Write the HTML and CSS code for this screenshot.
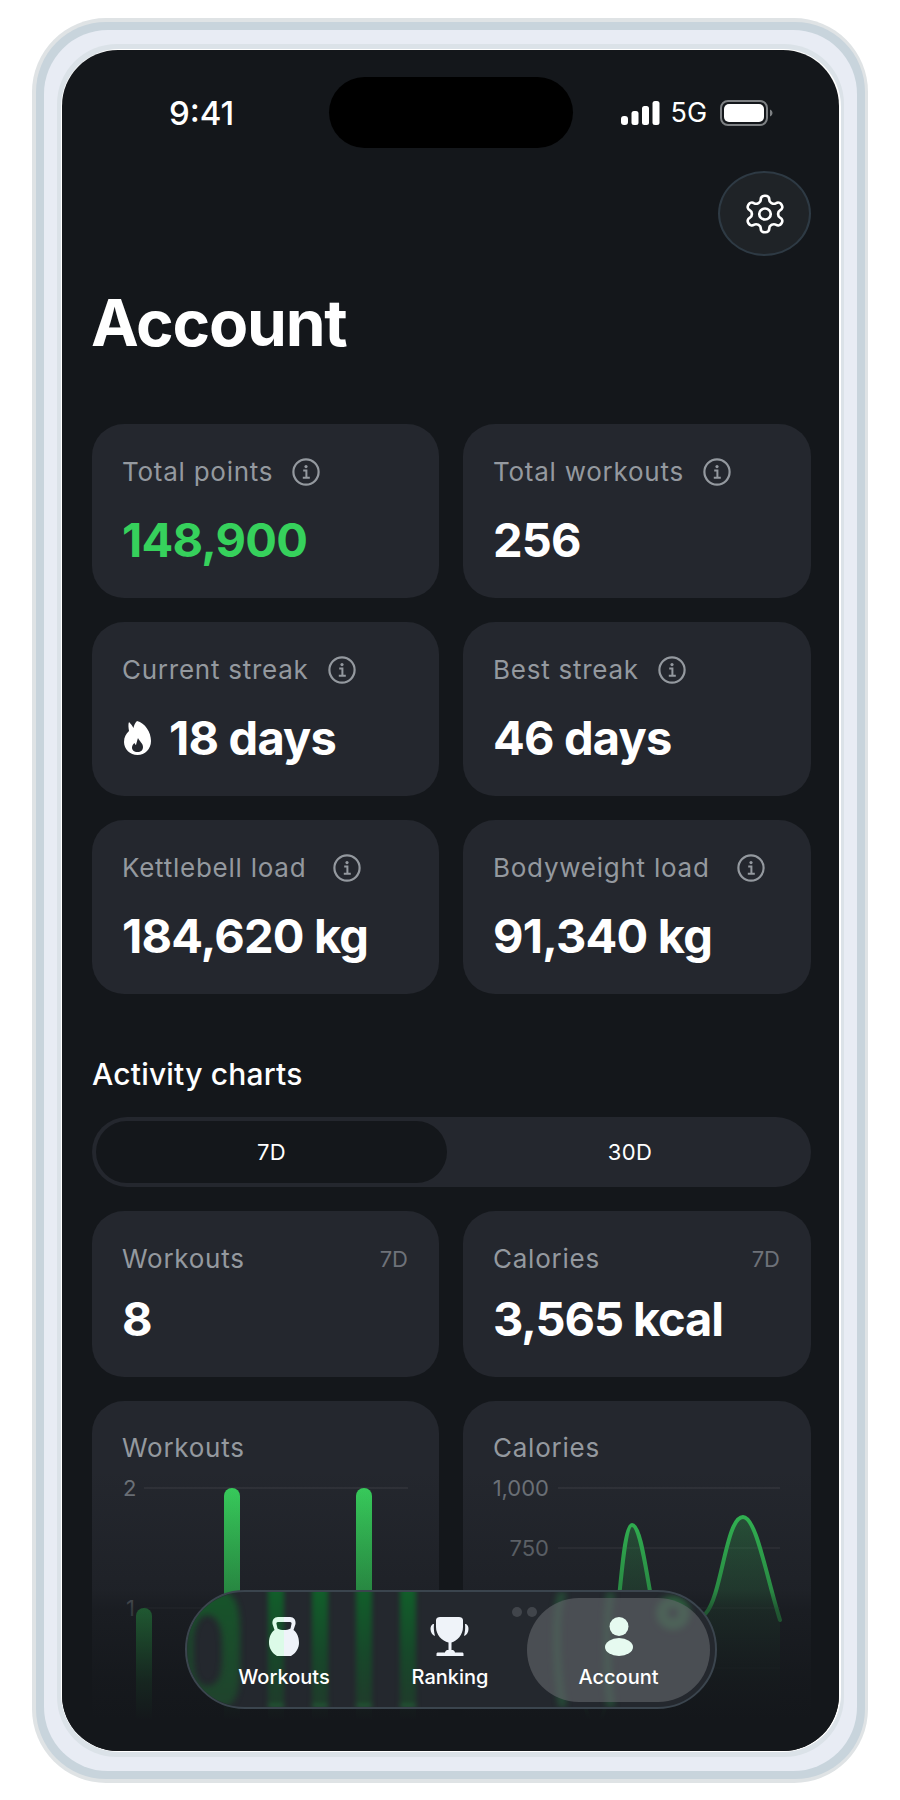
FILE: index.html
```html
<!DOCTYPE html>
<html lang="en">
<head>
    <meta charset="UTF-8">
    <meta name="viewport" content="width=device-width, initial-scale=1.0">
    <title>Account</title>
    <link rel="stylesheet" href="styles.css">
</head>
<body>
    <svg width="0" height="0" class="defs">
        <defs>
            <symbol id="info" viewBox="0 0 28 28">
                <circle cx="14" cy="14" r="12.6" fill="none" stroke="currentColor" stroke-width="2.2"/>
                <circle cx="14" cy="8.6" r="1.6" fill="currentColor"/>
                <path d="M11.2 12.6H14.4V19.6M10.8 19.8H17.8" fill="none" stroke="currentColor" stroke-width="2"/>
            </symbol>
            <linearGradient id="barFill" gradientUnits="userSpaceOnUse" x1="0" y1="23" x2="0" y2="263">
                <stop offset="0" stop-color="#39d35e"/>
                <stop offset="1" stop-color="#2bb04c"/>
            </linearGradient>
            <linearGradient id="areaFill" x1="0" y1="0" x2="0" y2="1">
                <stop offset="0" stop-color="#36c95a" stop-opacity="0.3"/>
                <stop offset="1" stop-color="#36c95a" stop-opacity="0.05"/>
            </linearGradient>
            <linearGradient id="stripeFill" x1="0" y1="0" x2="0" y2="1">
                <stop offset="0" stop-color="#11602a"/>
                <stop offset="0.55" stop-color="#17482a"/>
                <stop offset="0.97" stop-color="#1f3c2b"/>
                <stop offset="1" stop-color="#248a40"/>
            </linearGradient>
            <linearGradient id="ringFill" x1="0" y1="0" x2="0" y2="1">
                <stop offset="0" stop-color="#14602a"/>
                <stop offset="1" stop-color="#1f4a2d"/>
            </linearGradient>
            <linearGradient id="bellFill" x1="0" y1="0" x2="1" y2="0">
                <stop offset="0.5" stop-color="#dcfbe8"/>
                <stop offset="0.5" stop-color="#eff3f9"/>
            </linearGradient>
        </defs>
    </svg>

    <div class="frame frame-1"><div class="frame frame-2"><div class="frame frame-3"><div class="frame frame-4"><div class="frame frame-5">
        <main class="screen">
            <div class="status">
                <div class="time">9:41</div>
                <div class="island"></div>
                <div class="status-right">
                    <svg class="signal" width="39" height="24" viewBox="0 0 39 24" fill="#fff">
                        <rect x="0" y="15" width="7" height="9" rx="3"/>
                        <rect x="10.5" y="10" width="7" height="14" rx="2.5"/>
                        <rect x="21" y="5" width="7" height="19" rx="2.5"/>
                        <rect x="31.5" y="0" width="7" height="24" rx="2.5"/>
                    </svg>
                    <span class="net">5G</span>
                    <svg class="battery" width="53" height="26" viewBox="0 0 53 26">
                        <rect x="1" y="1" width="46" height="24" rx="7" fill="none" stroke="#7d8083" stroke-width="2"/>
                        <rect x="4" y="4" width="40" height="18" rx="5" fill="#fff"/>
                        <path d="M50 9.5C52 10.5 52.5 12 52.5 13S52 15.500 50 16.500Z" fill="#7d8083"/>
                    </svg>
                </div>
            </div>

            <div class="top-actions">
                <button class="settings">
                    <svg width="46" height="44" viewBox="0 0 24 24" preserveAspectRatio="none" fill="none" stroke="#fff" stroke-width="1.4" stroke-linecap="round" stroke-linejoin="round">
                        <path d="M12.22 2h-.44a2 2 0 0 0-2 2v.18a2 2 0 0 1-1 1.730l-.43.25a2 2 0 0 1-2 0l-.15-.08a2 2 0 0 0-2.730.73l-.22.38a2 2 0 0 0 .73 2.730l.15.1a2 2 0 0 1 1 1.720v.51a2 2 0 0 1-1 1.740l-.15.09a2 2 0 0 0-.73 2.730l.22.38a2 2 0 0 0 2.730.73l.15-.08a2 2 0 0 1 2 0l.43.25a2 2 0 0 1 1 1.730V20a2 2 0 0 0 2 2h.44a2 2 0 0 0 2-2v-.18a2 2 0 0 1 1-1.730l.43-.25a2 2 0 0 1 2 0l.15.08a2 2 0 0 0 2.730-.73l.22-.39a2 2 0 0 0-.73-2.730l-.15-.08a2 2 0 0 1-1-1.740v-.5a2 2 0 0 1 1-1.740l.15-.09a2 2 0 0 0 .73-2.730l-.22-.38a2 2 0 0 0-2.730-.73l-.15.08a2 2 0 0 1-2 0l-.43-.25a2 2 0 0 1-1-1.730V4a2 2 0 0 0-2-2z"/>
                        <circle cx="12" cy="12" r="3"/>
                    </svg>
                </button>
            </div>

            <h1 class="title">Account</h1>

            <section class="grid stats">
                <div class="card">
                    <div class="label">Total points <svg class="info"><use href="#info"/></svg></div>
                    <div class="value green">148,900</div>
                </div>
                <div class="card">
                    <div class="label">Total workouts <svg class="info"><use href="#info"/></svg></div>
                    <div class="value">256</div>
                </div>
                <div class="card">
                    <div class="label">Current streak <svg class="info"><use href="#info"/></svg></div>
                    <div class="value">
                        <svg class="flame" width="27" height="34" viewBox="0 0 27 34"><path fill="#fff" fill-rule="evenodd" d="M13 0C21 2 27 11 27 20C27 28 21 34 13.500 34C6 34 0 28 0 21C0 16 2 13 5 10C4.500 7 4 3 5 1C7 3 8.500 5 9.500 7C10 4 11 2 13 0ZM14 17C13 20 12.500 22 12 24C11.500 24 11 23 10.500 22C9.500 23 8 24 8 26.500C8 29 10 31 13.500 31C17 31 19 29 19 26C19 22 15 20 14 17Z"/></svg>
                        <span>18 days</span>
                    </div>
                </div>
                <div class="card">
                    <div class="label">Best streak <svg class="info"><use href="#info"/></svg></div>
                    <div class="value">46 days</div>
                </div>
                <div class="card">
                    <div class="label wide">Kettlebell load <svg class="info"><use href="#info"/></svg></div>
                    <div class="value">184,620 kg</div>
                </div>
                <div class="card">
                    <div class="label wide">Bodyweight load <svg class="info"><use href="#info"/></svg></div>
                    <div class="value">91,340 kg</div>
                </div>
            </section>

            <h2 class="section-title">Activity charts</h2>

            <div class="segment">
                <div class="segment-item active">7D</div>
                <div class="segment-item">30D</div>
            </div>

            <section class="grid summary">
                <div class="card small">
                    <div class="label-row"><span class="label">Workouts</span><span class="tag">7D</span></div>
                    <div class="value">8</div>
                </div>
                <div class="card small">
                    <div class="label-row"><span class="label">Calories</span><span class="tag">7D</span></div>
                    <div class="value">3,565 kcal</div>
                </div>
            </section>

            <section class="grid charts">
                <div class="card chart-card">
                    <div class="label">Workouts</div>
                    <svg class="plot" width="293" height="280" viewBox="0 0 293 280">
                        <g class="axis"><text x="0" y="31">2</text><text x="3" y="151">1</text></g>
                        <g class="gridline"><path d="M21 23H285M21 143H285"/></g>
                        <g fill="url(#barFill)">
                            <path d="M13 263V151a8 8 0 0 1 16 0V263Z"/>
                            <path d="M101 263V31a8 8 0 0 1 16 0V263Z"/>
                            <path d="M145 263V151a8 8 0 0 1 16 0V263Z"/>
                            <path d="M189 263V151a8 8 0 0 1 16 0V263Z"/>
                            <path d="M233 263V31a8 8 0 0 1 16 0V263Z"/>
                            <path d="M277 263V151a8 8 0 0 1 16 0V263Z"/>
                        </g>
                    </svg>
                </div>
                <div class="card chart-card">
                    <div class="label">Calories</div>
                    <svg class="plot" width="293" height="280" viewBox="0 0 293 280">
                        <g class="axis end"><text x="55" y="31">1,000</text><text x="55" y="91">750</text><text x="55" y="151">500</text><text x="55" y="211">250</text></g>
                        <g class="gridline"><path d="M64 23H286M64 83H286M64 143H286M64 203H286"/></g>
                        <path fill="url(#areaFill)" d="M64 129C80 129 85 260 101 260C123 260 124 60 138 60C152 60 157 181 175 181C190 181 197 165 212 148C228 130 232 52 249 52C262 52 272 110 286 155V263H64Z"/>
                        <path fill="none" stroke="#35c859" stroke-width="4" stroke-linecap="round" d="M64 129C80 129 85 260 101 260C123 260 124 60 138 60C152 60 157 181 175 181C190 181 197 165 212 148C228 130 232 52 249 52C262 52 272 110 286 155"/>
                    </svg>
                </div>
            </section>

            <div class="fade"></div>

            <nav class="tabbar">
                <svg class="lens" width="528" height="115" viewBox="0 0 528 115">
                    <g class="lens-stripes" fill="url(#stripeFill)">
                        <rect x="81" y="-6" width="16" height="121"/>
                        <rect x="125" y="-6" width="16" height="121"/>
                        <rect x="169" y="-6" width="16" height="121"/>
                        <rect x="213" y="-6" width="16" height="121"/>
                    </g>
                    <path class="lens-ring" fill="url(#ringFill)" fill-rule="evenodd" d="M0 0H36C50 0 53 20 53 40V75C53 95 50 115 36 115H0ZM20 23C12 23 6 35 6 50V68C6 85 12 94 20 94C30 94 35 85 35 68V50C35 35 30 23 20 23Z"/>
                    <circle class="lens-dot" cx="486" cy="21" r="11"/>
                    <path class="lens-line" d="M376 0C366 20 370 85 376 115M424 0C418 30 420 90 424 115"/>
                    <g fill="#5a5e64" opacity="0.55"><circle cx="330" cy="20" r="5"/><circle cx="345" cy="20" r="5"/></g>
                </svg>
                <div class="tab">
                    <svg width="30" height="39" viewBox="0 0 30 39"><path fill="url(#bellFill)" fill-rule="evenodd" d="M8 39C3 36 0 31 0 26C0 20 2 15.500 5.500 13L3.500 7C3 3 5 0 9 0H21C25 0 27 3 26.500 7L24.500 13C28 15.500 30 20 30 26C30 31 27 36 22 39ZM9 5C7.500 5 7.200 6 7.500 7L8.500 11.500C10.500 12.500 12.500 13 15 13C17.500 13 19.500 12.500 21.500 11.500L22.500 7C22.800 6 22.500 5 21 5Z"/></svg>
                    <span>Workouts</span>
                </div>
                <div class="tab">
                    <svg width="40" height="39" viewBox="0 0 40 39" fill="#eff3f9"><path d="M6 3C6 1 8 0 10 0H29C31 0 33 1 33 3V10C33 18 27 24 21.500 25.500V33C23.500 33 24.500 33.500 25 35.500H32C33 35.500 33.500 36 33.500 37V39H6.500V37C6.500 36 7 35.500 8 35.500H15C15.500 33.500 16.500 33 18.500 33V25.500C12 24 6 18 6 10Z"/><path d="M3 7C1 8 .5 10 .5 12C.5 15 2 18 5 19C4 15 3.500 11 4 7ZM36 7C38 8 38.500 10 38.500 12C38.500 15 37 18 34 19C35 15 35.500 11 35 7Z"/></svg>
                    <span>Ranking</span>
                </div>
                <div class="tab active">
                    <svg width="30" height="39" viewBox="0 0 30 39" fill="#e6faf0"><circle cx="15" cy="9.500" r="9.500"/><ellipse cx="15" cy="30" rx="14" ry="9"/></svg>
                    <span>Account</span>
                </div>
            </nav>
        </main>
    </div></div></div></div></div>
</body>
</html>
```

FILE: styles.css
```css
* {
    box-sizing: border-box;
}

body {
    margin: 0;
    background-color: #ffffff;
    font-family: 'Inter', 'Liberation Sans', sans-serif;
    color: #ffffff;
}

.defs {
    display: block;
    height: 0;
}

/* device bezel, one wrapper per colour ring */
.frame-1 {
    width: 836px;
    height: 1765px;
    margin: 18px 0 0 32px;
    padding: 4px 3px 4px 4px;
    background-color: #dfe3e5;
    border-radius: 74px;
}

.frame-2 {
    height: 100%;
    padding: 8px 8px 8px 8px;
    background-color: #c8d4dc;
    border-radius: 70px;
}

.frame-3 {
    height: 100%;
    padding: 14px 13px 14px 13px;
    background-color: #e8ecf4;
    border-radius: 64px;
}

.frame-4 {
    height: 100%;
    padding: 5px 3px 5px 4px;
    background-color: #dbe2e8;
    border-radius: 60px;
}

.frame-5 {
    height: 100%;
    padding: 1px 2px 1px 1px;
    background-color: #ffffff;
    border-radius: 58px;
}

.screen {
    position: relative;
    height: 100%;
    overflow: hidden;
    padding: 0 28px 0 30px;
    background-color: #14171b;
    border-radius: 56px;
}

.status {
    display: grid;
    grid-template-columns: 1fr 244px 1fr;
    margin: 0 -28px 0 -30px;
    padding-top: 27px;
}

.time {
    align-self: center;
    padding-top: 2px;
    padding-left: 107px;
    font-size: 33px;
    font-weight: 500;
    line-height: 1;
}

.island {
    height: 71px;
    background-color: #000000;
    border-radius: 36px;
}

.status-right {
    display: flex;
    align-items: center;
    padding-left: 48px;
}

.net {
    margin-left: 11px;
    font-size: 27px;
    line-height: 1;
}

.battery {
    margin-left: 13px;
}

.top-actions {
    display: flex;
    justify-content: flex-end;
    margin-top: 23px;
}

.settings {
    display: flex;
    align-items: center;
    justify-content: center;
    width: 93px;
    height: 85px;
    padding: 0;
    background-color: #1f2327;
    border: 2px solid #2e3a44;
    border-radius: 50%;
}

.title {
    margin: 27px 0 0 -1px;
    font-size: 64px;
    font-weight: 700;
    line-height: 80px;
    letter-spacing: -1.2px;
}

.grid {
    display: grid;
    grid-template-columns: 347px 348px;
    gap: 24px;
}

.stats {
    margin-top: 61px;
}

.card {
    height: 174px;
    padding: 28px 31px 0 30px;
    background-color: #24272e;
    border-radius: 32px;
}

.label {
    display: flex;
    align-items: center;
    gap: 19px;
    height: 40px;
    font-size: 26px;
    line-height: 40px;
    letter-spacing: 0.75px;
    color: #94999f;
}

.label.wide {
    gap: 27px;
}

.info {
    width: 28px;
    height: 28px;
    color: #94999f;
}

.value {
    display: flex;
    align-items: center;
    gap: 18px;
    margin-top: 18px;
    font-size: 47px;
    font-weight: 700;
    line-height: 60px;
    letter-spacing: -0.8px;
}

.flame {
    margin-left: 2px;
}

.green {
    color: #36d15c;
}

.section-title {
    margin: 62px 0 0;
    font-size: 30px;
    font-weight: 500;
    line-height: 36px;
    letter-spacing: 0.2px;
}

.segment {
    display: grid;
    grid-template-columns: 351px 1fr;
    height: 70px;
    margin-top: 25px;
    padding: 4px;
    background-color: #24272e;
    border-radius: 35px;
}

.segment-item {
    display: flex;
    align-items: center;
    justify-content: center;
    padding-left: 6px;
    font-size: 22px;
    letter-spacing: 0.4px;
}

.segment-item.active {
    padding-left: 0;
    background-color: #14171b;
    border-radius: 31px;
}

.summary {
    margin-top: 24px;
}

.card.small {
    height: 166px;
    padding-top: 28px;
}

.label-row {
    display: flex;
    align-items: center;
    justify-content: space-between;
}

.tag {
    font-size: 22px;
    color: #6e7279;
}

.card.small .value {
    margin-top: 10px;
    letter-spacing: -1.1px;
}

.charts {
    margin-top: 24px;
}

.card.chart-card {
    height: 340px;
    padding-top: 27px;
}

.plot {
    display: block;
    margin-top: -3px;
    margin-left: 1px;
    overflow: visible;
}

.axis text {
    font-family: 'Inter', sans-serif;
    font-size: 22px;
    fill: #6f747b;
}

.axis.end text {
    text-anchor: end;
}

.gridline path {
    stroke: #34373e;
    stroke-width: 1.5;
    fill: none;
}

/* content melts into the background behind the tab bar */
.fade {
    position: absolute;
    left: 0;
    right: 0;
    bottom: 0;
    height: 281px;
    background: linear-gradient(rgba(20, 23, 27, 0) 0, rgba(20, 23, 27, 0.35) 120px, rgba(20, 23, 27, 0.62) 139px, rgba(20, 23, 27, 0.9) 210px, #14171b 250px);
}

.tabbar {
    position: absolute;
    left: 123px;
    top: 1540px;
    display: grid;
    grid-template-columns: 166px 166px 183px;
    width: 532px;
    height: 119px;
    padding: 6px 5px 5px 14px;
    overflow: hidden;
    background-color: #24282e;
    border: 2px solid #3b454e;
    border-radius: 60px;
}

.lens {
    position: absolute;
    left: 0;
    top: 0;
}

.lens-stripes {
    filter: blur(2.5px);
}

.lens-ring {
    opacity: 0.8;
    filter: blur(3px);
}

.lens-dot {
    fill: none;
    stroke: #2e6a40;
    stroke-width: 12;
    opacity: 0.8;
    filter: blur(3px);
}

.lens-line {
    fill: none;
    stroke: #2a7a44;
    stroke-width: 8;
    opacity: 0.45;
    filter: blur(3px);
}

.tab {
    position: relative;
    display: flex;
    flex-direction: column;
    align-items: center;
    height: 104px;
    padding-top: 19px;
    font-size: 20px;
    font-weight: 500;
    line-height: 24px;
}

.tab span {
    margin-top: 9px;
}

.tab.active {
    margin-left: -6px;
    width: 183px;
    background-color: rgba(98, 102, 106, 0.62);
    border-radius: 52px;
}
```
